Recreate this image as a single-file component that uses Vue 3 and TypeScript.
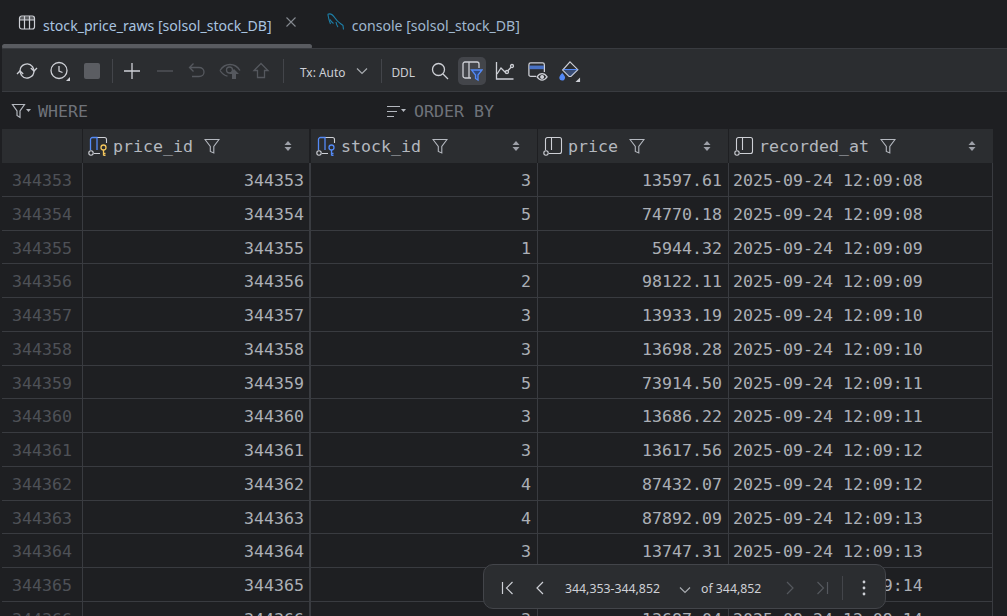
<script setup lang="ts">
interface Row { id: number; stock: number; price: string; time: string }
const raw: [number, string, string][] = [
  [3, '13597.61', '08'], [5, '74770.18', '08'], [1, '5944.32', '09'], [2, '98122.11', '09'],
  [3, '13933.19', '10'], [3, '13698.28', '10'], [5, '73914.50', '11'], [3, '13686.22', '11'],
  [3, '13617.56', '12'], [4, '87432.07', '12'], [4, '87892.09', '13'], [3, '13747.31', '13'],
  [3, '13702.44', '14'], [3, '13687.04', '14'],
]
const rows: Row[] = raw.map((r, i) => ({
  id: 344353 + i,
  stock: r[0],
  price: r[1],
  time: `2025-09-24 12:09:${r[2]}`,
}))
const columns = [
  { name: 'price_id', key: 'gold', cls: 'c1' },
  { name: 'stock_id', key: 'blue', cls: 'c2' },
  { name: 'price', key: '', cls: 'c3' },
  { name: 'recorded_at', key: '', cls: 'c4' },
]
</script>

<template>
  <div class="app">
    <div class="tabs">
      <div class="tab first">
        <svg class="ic16" width="18" height="18" viewBox="0 0 18 18" fill="none" stroke="#ced0d6" stroke-width="1.2">
          <rect x="1.5" y="2" width="15" height="13" rx="2.2" />
          <path d="M1.5 6h15M6.5 2v13M11.5 2v13" />
          <path d="M2 2.6h14v3.4H2z" fill="#ced0d6" fill-opacity=".35" stroke="none" />
        </svg>
        <span class="tabtext">stock_price_raws [solsol_stock_DB]</span>
        <svg class="close" width="12" height="12" viewBox="0 0 12 12" fill="none" stroke="#868a91" stroke-width="1.1">
          <path d="M1.5 1.5l9 9M10.5 1.500l-9 9" />
        </svg>
      </div>
      <div class="tab second">
        <svg width="18" height="18" viewBox="0 0 18 18" fill="none" stroke="#1d7fa8" stroke-width="1.1">
          <path d="M.5 1.500C3 0 6 2 8 5c2 3.500 4 4.500 8 7.500l.5 4" />
          <path d="M1 2c.5 3 1 6 2.500 9M3 6.500c1 2 2 3 3.500 4M9 9c.5 2.500 1 4 2 5" />
        </svg>
        <span class="tabtext">console [solsol_stock_DB]</span>
      </div>
    </div>
    <div class="scrollbar"><div class="thumb"></div></div>

    <div class="toolbar">
      <svg class="tb" style="margin-left:14px" width="22" height="22" viewBox="0 0 22 22" fill="none" stroke="#ced0d6" stroke-width="1.3">
        <path d="M4 11a7 7 0 0 1 12.500-4.300L18 10" />
        <path d="M21 8l-3 3-3.200-3" />
        <path d="M18 11a7 7 0 0 1-12.500 4.300L4 12" />
        <path d="M1 14l3-3 3.200 3" />
      </svg>
      <svg class="tb" style="margin-left:11px" width="22" height="22" viewBox="0 0 22 22" fill="none" stroke="#ced0d6" stroke-width="1.3">
        <circle cx="10" cy="10.500" r="8" />
        <path d="M10 6v5l3.500 1.500" />
        <path d="M21 17v4h-4z" fill="#ced0d6" stroke="none" />
      </svg>
      <span class="stop"></span>
      <span class="sep" style="margin-left:12px"></span>
      <svg class="tb" style="margin-left:10px" width="18" height="18" viewBox="0 0 18 18" fill="none" stroke="#ced0d6" stroke-width="1.3">
        <path d="M9 1v16M1 9h16" />
      </svg>
      <svg class="tb" style="margin-left:15px" width="18" height="18" viewBox="0 0 18 18" fill="none" stroke="#55585e" stroke-width="1.3">
        <path d="M1 9h16" />
      </svg>
      <svg class="tb" style="margin-left:13px" width="20" height="20" viewBox="0 0 20 20" fill="none" stroke="#55585e" stroke-width="1.3">
        <path d="M6.500 2.500L2.500 6.500l4 4M2.500 6.500H12c3 0 5 2 5 4.500s-2 4.500-5 4.500H5" />
      </svg>
      <svg class="tb" style="margin-left:12px" width="22" height="20" viewBox="0 0 22 20" fill="none" stroke="#55585e" stroke-width="1.300">
        <path d="M1 9.500C3.500 5.500 7 3.500 11 3.500s7.500 2 10 6" />
        <path d="M1 9.500c2 3 4.500 5 7.500 5.700" />
        <circle cx="10.500" cy="9" r="3" />
        <path d="M15 8l5 5h-3v5h-4v-5h-3z" fill="#55585e" stroke="none" />
      </svg>
      <svg class="tb" style="margin-left:11px" width="18" height="20" viewBox="0 0 18 20" fill="none" stroke="#55585e" stroke-width="1.3">
        <path d="M9 2.500L2 9.500h3.500v7h7v-7H16z" />
      </svg>
      <span class="sep" style="margin-left:13px"></span>
      <span class="txt" style="margin-left:16px">Tx: Auto</span>
      <svg class="tb" style="margin-left:11px" width="12" height="8" viewBox="0 0 12 8" fill="none" stroke="#a8abb0" stroke-width="1.2">
        <path d="M1 1.500l5 5 5-5" />
      </svg>
      <span class="sep" style="margin-left:13px"></span>
      <span class="txt" style="margin-left:9px">DDL</span>
      <svg class="tb" style="margin-left:16px" width="18" height="18" viewBox="0 0 18 18" fill="none" stroke="#ced0d6" stroke-width="1.3">
        <circle cx="7.500" cy="7.500" r="6" />
        <path d="M12 12l5 5" />
      </svg>
      <span class="active">
        <svg width="22" height="22" viewBox="0 0 22 22" fill="none" stroke="#ced0d6" stroke-width="1.3">
          <path d="M10 18H4a2 2 0 0 1-2-2V4a2 2 0 0 1 2-2h12a2 2 0 0 1 2 2v4" />
          <path d="M8 2v16" />
          <path d="M10.500 10h10.500l-4 5v5l-2.500-1.500V15z" stroke="#548af7" fill="#2f4a80" />
        </svg>
      </span>
      <svg class="tb" style="margin-left:9px" width="20" height="20" viewBox="0 0 20 20" fill="none" stroke="#ced0d6" stroke-width="1.3">
        <path d="M1.500 1v17h17" />
        <path d="M2 13l4-6 5 5 6-7" />
        <circle cx="12" cy="11" r="1.500" fill="#2b2d30" />
        <circle cx="17" cy="5" r="1.500" fill="#2b2d30" />
      </svg>
      <svg class="tb" style="margin-left:13px" width="20" height="20" viewBox="0 0 22 22" fill="none" stroke="#ced0d6" stroke-width="1.4">
        <path d="M9 17H3a2 2 0 0 1-2-2V4a2 2 0 0 1 2-2h13a2 2 0 0 1 2 2v8" />
        <path d="M1.500 5h16v4h-16z" fill="#548af7" stroke="none" fill-opacity=".75" />
        <path d="M10 17.500c1.700-2.500 3.500-3.500 5.500-3.500s3.800 1 5.500 3.500c-1.700 2.500-3.500 3.500-5.500 3.500s-3.800-1-5.500-3.500z" />
        <circle cx="15.500" cy="17.500" r="1.500" fill="#ced0d6" />
      </svg>
      <svg class="tb" style="margin-left:11px" width="22" height="22" viewBox="0 0 24 24" fill="none" stroke="#ced0d6" stroke-width="1.3">
        <path d="M12 2l8.500 8.500L13 18H11L4 11z" />
        <path d="M5 10.500h15" stroke="#548af7" />
        <path d="M5.500 11.500h14l-6.500 6h-2z" fill="#548af7" fill-opacity=".35" stroke="none" />
        <path d="M3.500 15c-1.500 2-2.500 3-2.500 4.200a2.500 2.500 0 0 0 5 0C6 18 5 17 3.500 15z" fill="#548af7" stroke="#548af7" />
        <path d="M23 19v5h-5z" fill="#ced0d6" stroke="none" />
      </svg>
    </div>

    <div class="filters">
      <div class="where">
        <svg width="20" height="18" viewBox="0 0 20 18" fill="none" stroke="#b4b8bf" stroke-width="1.200">
          <path d="M1.500 1.500h12L9 8v6.500l-3-2V8z" />
          <path d="M15 6h5l-2.500 3z" fill="#b4b8bf" stroke="none" />
        </svg>
        <span class="fl">WHERE</span>
      </div>
      <div class="order">
        <svg width="20" height="18" viewBox="0 0 20 18" fill="none" stroke="#b4b8bf" stroke-width="1.200">
          <path d="M1 3.500h13M1 8.500h10M1 13.500h7" />
          <path d="M15 6h5l-2.500 3z" fill="#b4b8bf" stroke="none" />
        </svg>
        <span class="fl">ORDER BY</span>
      </div>
    </div>

    <div class="grid">
      <div class="row head">
        <div class="gutter"></div>
        <div v-for="c in columns" :key="c.name" class="cell hcell" :class="c.cls">
          <svg class="colic" width="20" height="20" viewBox="0 0 20 20" fill="none" stroke="#ced0d6" stroke-width="1.100">
            <template v-if="c.key">
              <path d="M9 1.500h7.500a2 2 0 0 1 2 2V7M6 17.500h6" />
              <path d="M2.500 14V3.500a2 2 0 0 1 2-2H9V14" stroke="#548af7" stroke-width="1.300" />
              <circle cx="15.500" cy="11.500" r="2.500" :stroke="c.key === 'gold' ? '#f2c55c' : '#548af7'" stroke-width="1.300" />
              <path d="M15.500 14v5.500M15.500 17.500h2M15.500 19.500h2" :stroke="c.key === 'gold' ? '#f2c55c' : '#548af7'" stroke-width="1.300" />
            </template>
            <template v-else>
              <path d="M2.500 14V3.500a2 2 0 0 1 2-2h12a2 2 0 0 1 2 2v12a2 2 0 0 1-2 2H6M8.500 1.500V14" />
            </template>
            <circle cx="3" cy="17" r="2.200" />
          </svg>
          <span class="hname">{{ c.name }}</span>
          <svg class="funnel" width="16" height="16" viewBox="0 0 16 16" fill="none" stroke="#b4b8bf" stroke-width="1.100">
            <path d="M1 1.500h14L9.800 8.500v6.500l-3.500-1.500v-5z" />
          </svg>
          <svg class="sort" width="8" height="12" viewBox="0 0 8 12" fill="#9da0a8">
            <path d="M4 1l3.500 4h-7zM4 11L.5 7h7z" />
          </svg>
        </div>
      </div>
      <div v-for="r in rows" :key="r.id" class="row body">
        <div class="gutter num">{{ r.id }}</div>
        <div class="cell c1 val">{{ r.id }}</div>
        <div class="cell c2 val">{{ r.stock }}</div>
        <div class="cell c3 val">{{ r.price }}</div>
        <div class="cell c4 val left">{{ r.time }}</div>
      </div>
    </div>

    <div class="pager">
      <svg style="margin-left:17px" width="14" height="14" viewBox="0 0 14 14" fill="none" stroke="#ced0d6" stroke-width="1.200">
        <path d="M1.500 1v12M11.500 1l-6 6 6 6" />
      </svg>
      <svg style="margin-left:20px" width="10" height="14" viewBox="0 0 10 14" fill="none" stroke="#ced0d6" stroke-width="1.200">
        <path d="M8 1L2 7l6 6" />
      </svg>
      <span class="ptxt" style="margin-left:20px">344,353-344,852</span>
      <svg style="margin-left:19px;margin-top:4px" width="12" height="8" viewBox="0 0 12 8" fill="none" stroke="#a8abb0" stroke-width="1.200">
        <path d="M1 1.500l5 5 5-5" />
      </svg>
      <span class="ptxt" style="margin-left:10px">of 344,852</span>
      <svg style="margin-left:24px" width="10" height="14" viewBox="0 0 10 14" fill="none" stroke="#55585e" stroke-width="1.200">
        <path d="M2 1l6 6-6 6" />
      </svg>
      <svg style="margin-left:20px" width="14" height="14" viewBox="0 0 14 14" fill="none" stroke="#55585e" stroke-width="1.200">
        <path d="M12.500 1v12M2.500 1l6 6-6 6" />
      </svg>
      <span class="psep"></span>
      <svg style="margin-left:19px" width="4" height="16" viewBox="0 0 4 16" fill="#ced0d6">
        <circle cx="2" cy="2" r="1.400" /><circle cx="2" cy="8" r="1.400" /><circle cx="2" cy="14" r="1.400" />
      </svg>
    </div>
  </div>
</template>

<style>
html, body { margin: 0; background: #1e1f22; overflow: hidden; }
</style>

<style scoped>
.app {
  position: relative;
  width: 1007px;
  height: 616px;
  overflow: hidden;
  background: #1e1f22;
  font-family: "Noto Sans", sans-serif;
  color: #ced0d6;
}
.tabs { display: flex; height: 44px; align-items: center; }
.tab { display: flex; align-items: center; }
.tab.first { margin-left: 18px; }
.tab.second { margin-left: 30px; }
.tabtext { font-size: 14.1px; color: #a9c4e0; margin-left: 7px; padding-top: 6px; }
.second .tabtext { color: #a0b8d0; }
.ic16 { margin-top: 1px; }
.close { margin-left: 13px; }
.scrollbar { height: 5px; padding-left: 2px; }
.thumb { width: 310px; height: 5px; border-radius: 3px; background: #595b60; }
.toolbar {
  display: flex;
  align-items: center;
  height: 44px;
  margin-top: -1px;
  background: #2b2d30;
  border-top: 1px solid #393b40;
  border-bottom: 1px solid #393b40;
  margin-left: 2px;
  box-sizing: border-box;
  padding-top: 2px;
}
.tb { flex: none; }
.stop { width: 16px; height: 16px; margin-left: 13px; border-radius: 2px; background: #5b5d62; flex: none; }
.sep { width: 1px; height: 24px; background: #43454a; flex: none; }
.txt { font-size: 11.9px; color: #ced0d6; white-space: nowrap; padding-top: 1px; }
.active {
  width: 28px; height: 28px; margin-left: 9px; border-radius: 5px; background: #43454a;
  display: flex; align-items: center; justify-content: center; flex: none;
}
.filters {
  display: flex;
  height: 37px;
  align-items: center;
  box-sizing: border-box;
  padding-top: 2px;
  font-family: "DejaVu Sans Mono", monospace;
}
.where { display: flex; align-items: center; width: 386px; padding-left: 11px; box-sizing: border-box; }
.order { display: flex; align-items: center; }
.fl { font-size: 16.6px; color: #6f737a; margin-left: 7px; }
.order .fl { margin-left: 8px; }
.grid { margin-left: 2px; width: 991px; font-family: "DejaVu Sans Mono", monospace; }
.row { display: flex; box-sizing: border-box; }
.head { height: 34px; background: #2b2d30; }
.body { height: 33.75px; border-bottom: 1px solid #393b40; }
.gutter { width: 81px; flex: none; box-sizing: border-box; border-right: 1px solid #393b40; }
.head .gutter, .head .cell { border-right-color: #1e1f22; }
.num { color: #4e5157; text-align: right; font-size: 16.6px; line-height: 35px; padding-right: 10px; }
.cell { flex: none; box-sizing: border-box; border-right: 1px solid #393b40; }
.c1 { width: 228px; border-right-width: 2px; }
.c2 { width: 227px; }
.c3 { width: 191px; }
.c4 { width: 264px; }
.head .c4 { border-right: none; }
.val { font-size: 16.6px; line-height: 35px; text-align: right; padding-right: 6px; color: #abafb6; }
.val.c1 { padding-right: 5px; }
.val.left { text-align: left; padding-left: 4px; }
.hcell { display: flex; align-items: center; padding-left: 5px; position: relative; }
.colic { flex: none; }
.hname { font-size: 16.6px; margin-left: 5px; color: #b4b8bf; }
.funnel { margin-left: 11px; flex: none; }
.sort { position: absolute; right: 17px; top: 11px; }
.pager {
  position: absolute;
  left: 483px;
  top: 564px;
  width: 403px;
  height: 45px;
  box-sizing: border-box;
  display: flex;
  align-items: center;
  padding-top: 2px;
  background: #2b2d30;
  border: 1px solid #43454a;
  border-radius: 10px;
}
.ptxt { font-size: 12.3px; color: #ced0d6; white-space: nowrap; padding-top: 2px; }
.psep { width: 1px; height: 24px; margin-left: 13px; background: #43454a; }
</style>
